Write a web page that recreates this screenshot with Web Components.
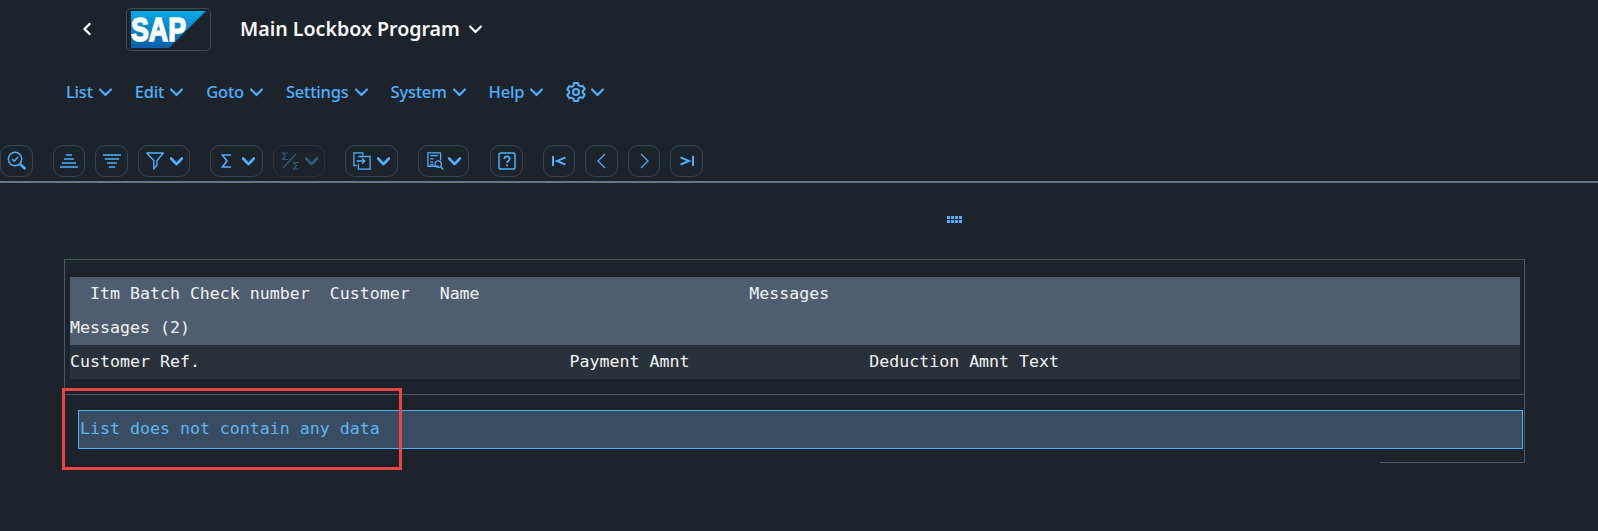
<!DOCTYPE html>
<html lang="en">
<head>
<meta charset="utf-8">
<title>Main Lockbox Program</title>
<style>
  html, body { margin: 0; padding: 0; background: #1d232b; }
  body { width: 1598px; height: 531px; overflow: hidden; font-family: "Noto Sans", sans-serif; color: #f5f6f7; }
</style>
</head>
<body>
<app-page>
  <shell-bar title-text="Main Lockbox Program"></shell-bar>
  <menu-bar>
    <menu-item>List</menu-item>
    <menu-item>Edit</menu-item>
    <menu-item>Goto</menu-item>
    <menu-item>Settings</menu-item>
    <menu-item>System</menu-item>
    <menu-item>Help</menu-item>
    <menu-item icon="gear"></menu-item>
  </menu-bar>
  <tool-bar>
    <tool-group><tool-button icon="find" w="33"></tool-button></tool-group>
    <tool-group>
      <tool-button icon="asc" w="32"></tool-button>
      <tool-button icon="desc" w="33"></tool-button>
      <tool-button icon="filter" w="52" caret></tool-button>
    </tool-group>
    <tool-group>
      <tool-button icon="sum" w="53" caret pad="10" gap="10"></tool-button>
      <tool-button icon="subsum" w="52" caret disabled gap="4"></tool-button>
    </tool-group>
    <tool-group><tool-button icon="export" w="53" caret></tool-button></tool-group>
    <tool-group><tool-button icon="layout" w="51" caret pad="8" gap="4"></tool-button></tool-group>
    <tool-group style="margin-left:1px"><tool-button icon="help" w="33"></tool-button></tool-group>
    <tool-group>
      <tool-button icon="first" w="32"></tool-button>
      <tool-button icon="prev" w="33"></tool-button>
      <tool-button icon="next" w="32"></tool-button>
      <tool-button icon="last" w="33"></tool-button>
    </tool-group>
  </tool-bar>
  <grip-handle></grip-handle>
  <list-frame>
    <list-row slot="head" tone="head">  Itm Batch Check number  Customer   Name                           Messages</list-row>
    <list-row slot="head" tone="head">Messages (2)</list-row>
    <list-row slot="head" tone="sub">Customer Ref.                                     Payment Amnt                  Deduction Amnt Text</list-row>
    <list-message slot="body">List does not contain any data</list-message>
  </list-frame>
  <red-marker></red-marker>
</app-page>

<script>
const CHEVRON = '<svg viewBox="0 0 12 8" width="13" height="9" fill="none" stroke="currentColor" stroke-width="2" stroke-linecap="round" stroke-linejoin="round"><path d="M1 1.200 6 6.400 11 1.200"/></svg>';

const ICONS = {
  gear: '<svg viewBox="0 0 20 20" width="20" height="20" fill="none" stroke="currentColor" stroke-width="2" stroke-linejoin="round"><path d="M8 1h4l.6 2.500 1.600.9 2.500-.7 2 3.400-1.900 1.800v1.800l1.900 1.800-2 3.400-2.500-.7-1.600.9L12 19H8l-.6-2.500-1.600-.9-2.500.7-2-3.400 1.900-1.800V9.300L1.300 7.500l2-3.400 2.500.7 1.600-.9z"/><circle cx="10" cy="10" r="3"/></svg>',
  find: '<svg viewBox="0 0 20 20" width="20" height="20" fill="none" stroke="currentColor" stroke-width="1.400"><circle cx="8" cy="8" r="6.700"/><path d="M5 8l2.200 2.200L11 6" stroke-width="1.500"/><path d="M13 13l5.500 5" stroke-width="2.400"/></svg>',
  asc: '<svg viewBox="0 0 20 16" width="20" height="16" fill="none" stroke="currentColor" stroke-width="1.500"><path d="M7 2h6M5 6h10M3 10h14M1 14h18"/></svg>',
  desc: '<svg viewBox="0 0 20 16" width="20" height="16" fill="none" stroke="currentColor" stroke-width="1.500"><path d="M1 2h18M3 6h14M5 10h10M7 14h6"/></svg>',
  filter: '<svg viewBox="0 0 18 18" width="18" height="18" fill="none" stroke="currentColor" stroke-width="1.400" stroke-linejoin="round"><path d="M.7 1h16.600L11 8.500V13l-3.200 4V8.500z"/></svg>',
  sum: '<svg viewBox="0 0 12 16" width="11" height="16" fill="none" stroke="currentColor" stroke-width="1.700"><path d="M11 1.500H1.500L6.500 8l-5 6.500H11"/></svg>',
  subsum: '<svg viewBox="0 0 20 18" width="20" height="18" fill="none" stroke="currentColor" stroke-width="1.200"><path d="M7 1H1.500L4.500 4 1.500 7.500H7M2 16 15 2M18 10.500H12.500L15.500 13.500 12.500 17H18"/></svg>',
  export: '<svg viewBox="0 0 20 20" width="18" height="18" fill="none" stroke="currentColor" stroke-width="1.400"><path d="M11 4V1H1v14h3"/><path d="M6 5h13v14H6v-6M4 10h9M10 7l3 3-3 3"/></svg>',
  layout: '<svg viewBox="0 0 16 18" width="17" height="19" fill="none" stroke="currentColor" stroke-width="1.200"><path d="M11 13.500H.8V.8h12V8"/><path d="M3 3.500h7.500M3 6.500h3M3 9.500h3M3 12h3"/><circle cx="10.500" cy="11.500" r="3"/><path d="M12.700 13.700l2.600 2.900" stroke-width="1.500"/></svg>',
  help: '<svg viewBox="0 0 18 18" width="18" height="18" fill="none" stroke="currentColor" stroke-width="1.500"><rect x="1" y="1" width="16" height="16" rx="1.800"/><path d="M6.300 7c0-1.700 1.200-2.600 2.700-2.600S11.700 5.300 11.700 7 9 9 9 11" stroke-width="1.700"/><path d="M9 12.500v1.700" stroke-width="1.800"/></svg>',
  first: '<svg viewBox="0 0 14 10" width="14" height="10" fill="none" stroke="currentColor" stroke-width="2"><path d="M1 0v10M13.500 1.300 5 5l8.500 3.700"/></svg>',
  prev: '<svg viewBox="0 0 9 16" width="9" height="16" fill="none" stroke="currentColor" stroke-width="1.200"><path d="M8 1 1 8l7 7"/></svg>',
  next: '<svg viewBox="0 0 9 16" width="9" height="16" fill="none" stroke="currentColor" stroke-width="1.200"><path d="M1 1l7 7-7 7"/></svg>',
  last: '<svg viewBox="0 0 14 10" width="14" height="10" fill="none" stroke="currentColor" stroke-width="2"><path d="M13 0v10M.5 1.300 9 5 .5 8.700"/></svg>'
};

function define(name, css, html, init) {
  customElements.define(name, class extends HTMLElement {
    connectedCallback() {
      if (this.shadowRoot) return;
      const root = this.attachShadow({ mode: 'open' });
      root.innerHTML = '<style>' + css + '</style>' + (typeof html === 'function' ? html(this) : html);
      if (init) init(this, root);
    }
  });
}

define('app-page', ':host{display:block;position:relative;width:1598px;height:531px}', '<slot></slot>');

define('shell-bar',
  `:host{display:flex;align-items:center;height:58px;box-sizing:border-box;padding-left:82px;color:#f5f6f7}
   .back{display:flex;width:44px;flex:none;color:#fff}
   .logo{flex:none;box-sizing:border-box;width:85px;height:43px;margin-top:1px;border:1px solid #434a54;border-radius:5px;padding:2px 0 0 4px;display:block}
   svg{display:block}
   h1{margin:0 0 0 29px;font:600 19.6px/26px "Noto Sans",sans-serif;white-space:nowrap}
   .caret{margin-left:9px;margin-top:1px;display:flex;color:#f5f6f7}`,
  el => `
   <span class="back"><svg viewBox="0 0 10 14" width="10" height="14" fill="none" stroke="currentColor" stroke-width="2.400" stroke-linecap="round" stroke-linejoin="round"><path d="M7.500 2 2.500 7l5 5"/></svg></span>
   <span class="logo"><svg viewBox="0 0 75 37" width="75" height="37">
     <defs><linearGradient id="g" x1="0" y1="0" x2="0" y2="1"><stop offset="0" stop-color="#00a9e6"/><stop offset="1" stop-color="#0a5fab"/></linearGradient></defs>
     <polygon points="0,0 75,0 38,37 0,37" fill="url(#g)"/>
     <text x="0" y="30" font-family="Liberation Sans" font-weight="700" font-size="33" fill="#fff" stroke="#fff" stroke-width="1.600" textLength="55" lengthAdjust="spacingAndGlyphs">SAP</text>
   </svg></span>
   <h1>${el.getAttribute('title-text')}</h1>
   <span class="caret">${CHEVRON}</span>`);

define('menu-bar',
  `:host{display:flex;align-items:center;gap:23px;height:65px;padding:3px 0 0 66px;box-sizing:border-box}`,
  '<slot></slot>');

define('menu-item',
  `:host{display:inline-flex;align-items:center;gap:6px;color:#4db1ff;font:500 16.5px/22px "Noto Sans",sans-serif;letter-spacing:-.2px}
   svg{display:block} .c{display:flex;margin-top:1px} .g{display:flex;margin-right:-1px}`,
  el => (el.getAttribute('icon') ? `<span class="g">${ICONS[el.getAttribute('icon')]}</span>` : '<slot></slot>') + `<span class="c">${CHEVRON}</span>`);

define('tool-bar',
  `:host{display:flex;gap:20px;padding:22px 0 4px;border-bottom:2px solid #66788c;height:32px}`,
  '<slot></slot>');

define('tool-group', ':host{display:flex;gap:10px}', '<slot></slot>');

define('tool-button',
  `:host{display:flex;align-items:center;justify-content:center;box-sizing:border-box;height:32px;border:1px solid #36465a;border-radius:10px;color:#4db1ff;gap:6px}
   :host([disabled]){border-color:#2a3440;color:#2f5a7f}
   :host([caret]){justify-content:flex-start;padding-left:7px}
   .i,.c{display:flex} svg{display:block}
   .c svg{stroke-width:2.500}`,
  el => `<span class="i">${ICONS[el.getAttribute('icon')]}</span>` + (el.hasAttribute('caret') ? `<span class="c">${CHEVRON}</span>` : ''),
  el => {
    el.style.width = el.getAttribute('w') + 'px';
    if (el.hasAttribute('pad')) el.style.paddingLeft = el.getAttribute('pad') + 'px';
    if (el.hasAttribute('gap')) el.style.gap = el.getAttribute('gap') + 'px';
  });

define('grip-handle',
  `:host{display:flex;justify-content:center;box-sizing:border-box;height:76px;padding:33px 0 0 311px}
   .d{display:grid;grid-template-columns:repeat(4,3px);grid-auto-rows:3px;column-gap:1.33px;row-gap:1px;height:7px}
   i{background:#4db1ff}`,
  '<div class="d"><i></i><i></i><i></i><i></i><i></i><i></i><i></i><i></i></div>');

define('list-frame',
  `:host{display:block;margin-left:64px;width:1461px;box-sizing:border-box;position:relative}
   .top{border:1px solid #47566a;border-bottom:1px solid #47566a;height:136px;box-sizing:border-box;padding:17px 4px 0 5px}
   .bottom{border-right:1px solid #47566a;height:68px;box-sizing:border-box;padding:15px 1px 0 14px;position:relative}
   .bottom::after{content:"";position:absolute;right:-1px;bottom:0;width:145px;border-bottom:1px solid #47566a}`,
  `<div class="top"><slot name="head"></slot></div><div class="bottom"><slot name="body"></slot></div>`);

define('list-row',
  `:host{display:block;height:34px;white-space:pre;font:400 16.6px/34px "DejaVu Sans Mono",monospace;color:#f1f2f3;background:#4e5d70}
   :host([tone="sub"]){background:#2a313b}`,
  '<slot></slot>');

define('list-message',
  `:host{display:block;box-sizing:border-box;height:39px;border:1px solid #4db1ff;background:#3a4c62;color:#5db6f2;white-space:pre;padding-left:1px;font:400 16.6px/35px "DejaVu Sans Mono",monospace}`,
  '<slot></slot>');

define('red-marker',
  `:host{position:absolute;left:62px;top:388px;width:340px;height:82px;box-sizing:border-box;border:3px solid #f04444}`,
  '');
</script>
</body>
</html>
